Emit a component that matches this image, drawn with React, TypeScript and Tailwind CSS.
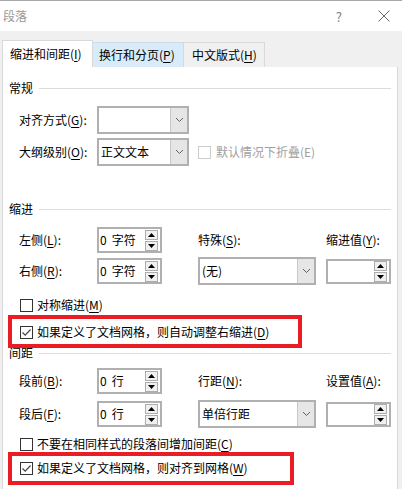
import React from "react";

const FONT = { fontFamily: '"Microsoft YaHei", "Noto Sans CJK SC", "Noto Sans", sans-serif' };

function U({ c }: { c: string }) {
  return <span className="underline underline-offset-[2px]">{c}</span>;
}

function Heading({ text }: { text: string }) {
  return (
    <div className="flex items-center h-[16px] pl-[6px] pr-[6px]">
      <span className="leading-[16px]">{text}</span>
      <div className="flex-1 h-px bg-[#dcdcdc] ml-[6px]" />
    </div>
  );
}

function Chevron() {
  return (
    <svg width="9" height="6" viewBox="0 0 9 6">
      <polyline points="1,1 4.5,4.5 8,1" fill="none" stroke="#606060" strokeWidth="1" />
    </svg>
  );
}

function Dropdown({ w, h, text }: { w: number; h: number; text?: string }) {
  return (
    <div
      className="flex border-2 border-[#b0b0b0] bg-white"
      style={{ width: w, height: h }}
    >
      <div className="flex-1 flex items-center pl-[2px] text-[12px] text-black">{text}</div>
      <div className="w-[17px] bg-[#e6e6e6] border-l border-[#c8c8c8] flex items-center justify-center">
        <Chevron />
      </div>
    </div>
  );
}

function SpinBtn({ up }: { up: boolean }) {
  return (
    <div className="w-[13px] h-[10px] border border-[#adadad] bg-[#f0f0f0] flex items-center justify-center">
      <svg width="7" height="4" viewBox="0 0 7 4">
        {up ? <polygon points="3.5,0 7,4 0,4" fill="#000" /> : <polygon points="0,0 7,0 3.5,4" fill="#000" />}
      </svg>
    </div>
  );
}

function Spin({ num, unit, h = 26 }: { num?: string; unit?: string; h?: number }) {
  return (
    <div
      className="flex items-center border-2 border-[#b0b0b0] bg-white w-[65px] pr-[2px]"
      style={{ height: h }}
    >
      <div className="flex-1 pl-[1px] text-[12px] text-black">
        {num && (
          <>
            <span>{num}</span>
            <span className="ml-[5px]">{unit}</span>
          </>
        )}
      </div>
      <div className="flex flex-col gap-[1px]">
        <SpinBtn up />
        <SpinBtn up={false} />
      </div>
    </div>
  );
}

function Check({ checked, disabled }: { checked?: boolean; disabled?: boolean }) {
  return (
    <div
      className={
        "w-[13px] h-[13px] border bg-white flex items-center justify-center " +
        (disabled ? "border-[#cccccc]" : "border-[#333333]")
      }
    >
      {checked && (
        <svg width="11" height="11" viewBox="0 0 11 11">
          <polyline points="1.5,5.5 4.2,8.2 9.5,2.5" fill="none" stroke="#444" strokeWidth="1.2" />
        </svg>
      )}
    </div>
  );
}

function Label({ children }: { children: React.ReactNode }) {
  return <div className="w-[78px] text-[12px] text-black">{children}</div>;
}

export default function App() {
  return (
    <div className="relative w-[402px] h-[489px] overflow-hidden bg-[#f0f0f0] text-[12px] text-black" style={FONT}>
      {/* title bar */}
      <div className="h-px bg-[#a8a8a8]" />
      <div className="h-[30px] bg-white flex items-center pl-[3px] pr-[12px]">
        <span className="text-[#999999] text-[12px] leading-none">段落</span>
        <div className="flex-1" />
        <span className="text-[#808080] text-[13px] leading-none mr-[36px]">?</span>
        <svg width="12" height="12" viewBox="0 0 12 12">
          <line x1="0.5" y1="0.5" x2="11.5" y2="11.5" stroke="#707070" strokeWidth="1" />
          <line x1="11.5" y1="0.5" x2="0.5" y2="11.5" stroke="#707070" strokeWidth="1" />
        </svg>
      </div>
      {/* tabs */}
      <div className="flex items-end pl-[2px] pt-[9px]">
        <div className="w-[91px] h-[27px] bg-white border border-b-0 border-[#d9d9d9] flex items-center pl-[7px]">
          缩进和间距(<U c="I" />)
        </div>
        <div className="w-[91px] h-[25px] bg-[#d9ebf9] border border-b-0 border-l-0 border-[#c9dcec] flex items-center pl-[6px]">
          换行和分页(<U c="P" />)
        </div>
        <div className="w-[81px] h-[25px] bg-[#f0f0f0] border border-b-0 border-l-0 border-[#d9d9d9] flex items-center pl-[8px]">
          中文版式(<U c="H" />)
        </div>
      </div>
      {/* content panel */}
      <div className="ml-[2px] w-[396px] h-[430px] bg-white border-l border-r border-[#d9d9d9]">
        <div className="h-[13px]" />
        <Heading text="常规" />
        <div className="flex items-center pl-[16px] h-[28px] mt-[10px]">
          <Label>
            对齐方式(<U c="G" />):
          </Label>
          <Dropdown w={92} h={28} />
        </div>
        <div className="flex items-center pl-[16px] h-[28px] mt-[4px]">
          <Label>
            大纲级别(<U c="O" />):
          </Label>
          <Dropdown w={92} h={28} text="正文文本" />
          <div className="ml-[9px] flex items-center gap-[5px]">
            <Check disabled />
            <span className="text-[#a0a0a0]">默认情况下折叠(E)</span>
          </div>
        </div>

        <div className="h-[35px]" />
        <Heading text="缩进" />
        <div className="flex items-center pl-[16px] h-[26px] mt-[10px]">
          <Label>
            左侧(<U c="L" />):
          </Label>
          <Spin num="0" unit="字符" />
          <div className="ml-[36px] w-[128px]">
            特殊(<U c="S" />):
          </div>
          <div>
            缩进值(<U c="Y" />):
          </div>
        </div>
        <div className="flex items-center pl-[16px] h-[28px] mt-[4px]">
          <Label>
            右侧(<U c="R" />):
          </Label>
          <Spin num="0" unit="字符" />
          <div className="ml-[36px]">
            <Dropdown w={118} h={28} text="(无)" />
          </div>
          <div className="ml-[10px]">
            <Spin h={25} />
          </div>
        </div>
        <div className="flex items-center gap-[4px] pl-[17px] h-[16px] mt-[12px]">
          <Check />
          <span>
            对称缩进(<U c="M" />)
          </span>
        </div>
        <div className="flex items-center gap-[4px] pl-[17px] h-[16px] mt-[11px]">
          <Check checked />
          <span>
            如果定义了文档网格，则自动调整右缩进(<U c="D" />)
          </span>
        </div>

        <div className="h-[5px]" />
        <Heading text="间距" />
        <div className="flex items-center pl-[16px] h-[26px] mt-[7px]">
          <Label>
            段前(<U c="B" />):
          </Label>
          <Spin num="0" unit="行" />
          <div className="ml-[36px] w-[128px]">
            行距(<U c="N" />):
          </div>
          <div>
            设置值(<U c="A" />):
          </div>
        </div>
        <div className="flex items-center pl-[16px] h-[28px] mt-[6px]">
          <Label>
            段后(<U c="F" />):
          </Label>
          <Spin num="0" unit="行" />
          <div className="ml-[36px]">
            <Dropdown w={118} h={28} text="单倍行距" />
          </div>
          <div className="ml-[10px]">
            <Spin h={25} />
          </div>
        </div>
        <div className="flex items-center gap-[4px] pl-[17px] h-[16px] mt-[8px]">
          <Check />
          <span>
            不要在相同样式的段落间增加间距(<U c="C" />)
          </span>
        </div>
        <div className="flex items-center gap-[4px] pl-[17px] h-[16px] mt-[8px]">
          <Check checked />
          <span>
            如果定义了文档网格，则对齐到网格(<U c="W" />)
          </span>
        </div>
      </div>

      {/* red annotation boxes */}
      <div className="absolute left-[8px] top-[315px] w-[294px] h-[33px] border-4 border-[#ea1d25]" />
      <div className="absolute left-[8px] top-[452px] w-[286px] h-[33px] border-4 border-[#ea1d25]" />
    </div>
  );
}
